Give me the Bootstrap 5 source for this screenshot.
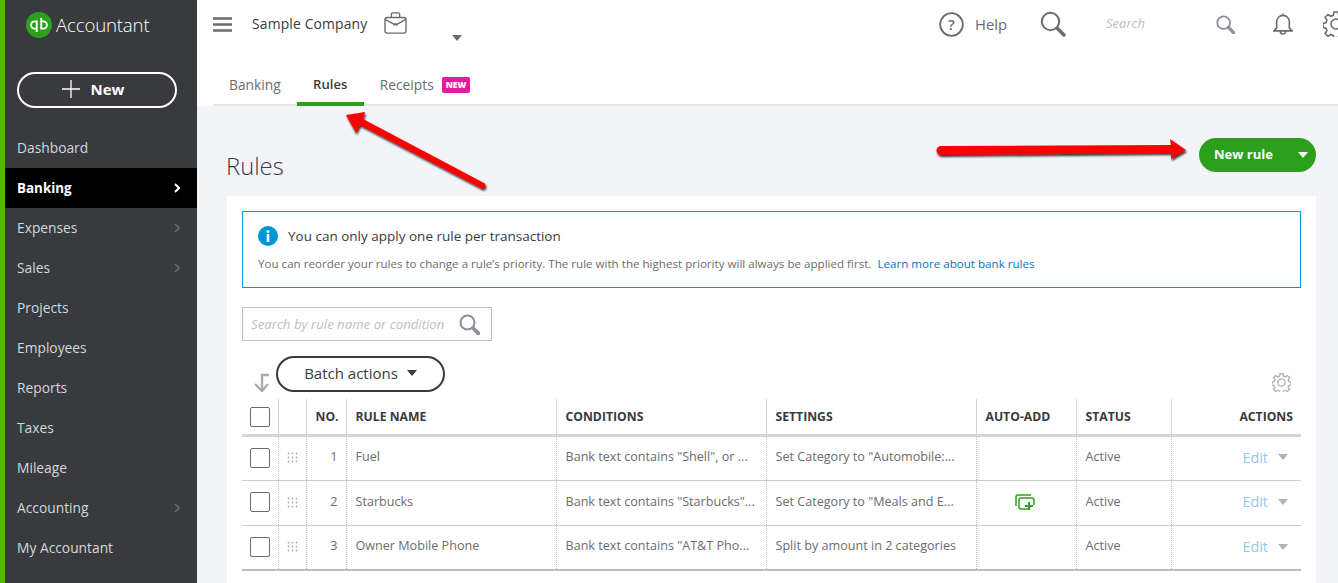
<!DOCTYPE html>
<html lang="en"><head><meta charset="utf-8"><title>Rules</title>
<link rel="stylesheet" href="https://cdn.jsdelivr.net/npm/bootstrap@5.3.0/dist/css/bootstrap.min.css">
<style>
html,body{height:583px;overflow:hidden}
body{font-family:"Open Sans","Noto Sans",sans-serif;color:#393a3d;background:#f2f4f8;width:1338px;position:relative}
.shell{height:583px}
.side{width:197px;flex:none;background:#393a3d;border-left:5px solid #53b700;height:583px;overflow:hidden}
.logo-row{height:50px;padding-left:21px;color:#fff;font-size:18.7px;font-weight:300;gap:4px;letter-spacing:-.2px}
.new-pill{width:160px;height:36px;margin:22px 0 0 12px;border:2px solid #fff;border-radius:18px;color:#fff;font-weight:700;font-size:15px;gap:11px;background:transparent;padding:0 8px 2px 0}
.new-pill:hover{color:#fff}
.side-nav{margin-top:20px}
.side-link{height:40px;padding:0 17px 0 12px;color:#d4d7dc;font-size:13.8px;font-weight:400;text-decoration:none}
.side-link.on{background:#000;color:#fff;font-weight:700;font-size:13.4px}
.chev{width:6px;height:10px;fill:none;stroke:#6b6c72;stroke-width:1.6}
.on .chev{stroke:#fff;stroke-width:2}
.main-col{flex:1;min-width:0}
.top-area{height:106px;background:#fff}
.top-row{height:48px;padding-left:16px;position:relative}
.company{font-size:13.9px;margin-left:20px;color:#393a3d;letter-spacing:.15px}
.tri{width:0;height:0;border-left:5px solid transparent;border-right:5px solid transparent;border-top:6px solid #6b6c72}
.tab-row{height:58px;margin-left:16px;padding-left:16px;border-bottom:2px solid #e3e5e9}
.tab-item{height:58px;font-size:13.8px;color:#6b6c72;padding:20px 16px 0;text-decoration:none;line-height:1;display:flex;align-items:center;gap:8px;border-bottom:4px solid transparent;flex:none}
.tab-item.first{padding-left:0;padding-right:16px}
.tab-item.on{width:67px;padding-left:0;padding-right:0;justify-content:center;font-size:13.1px;color:#393a3d;font-weight:600;border-bottom:4px solid #2ca01c;border-radius:2px 2px 0 0}
.new-tag{background:#e31ba3;color:#fff;font-size:8.500px;font-weight:800;padding:4px 4px;border-radius:2px;line-height:1}
.help-text{font-size:14.8px;color:#6b6c72}
.head-search{font-size:13px;font-style:italic;color:#babec5}
.page-head{height:90px;padding:32px 22px 0 29px}
.page-title{font-size:23.800px;font-weight:300;margin:14px 0 0;color:#393a3d}
.rule-btn{width:117px;height:34px;border-radius:17px;background:#2ca01c;color:#fff;font-size:13px;font-weight:700;border:0;padding:0 8px 0 15px}
.rule-btn:hover{background:#2ca01c;color:#fff}
.tri-w{border-top-color:#fff}
.panel{margin:0 22px 0 30px;background:#fff;padding:15px;height:400px}
.info-box{height:77px;border:1px solid #0097d8;padding:14px 15px}
.info-title{font-size:13.500px;font-weight:500;color:#393a3d}
.info-body{font-size:11.6px;color:#6b6c72;margin-top:9px}
.info-body a{color:#0077c5;text-decoration:none;margin-left:3px}
.rule-search{width:250px;height:34px;border:1px solid #babec5;margin-top:19px;padding:1px 11px 0 8px;font-size:13.2px;font-style:italic;color:#babec5}
.batch-line{height:58px;position:relative}
.batch-btn{width:169px;height:36px;border:2px solid #393a3d;border-radius:18px;background:#fff;font-size:15px;font-weight:500;color:#393a3d;gap:9px;padding:0 0 2px;margin:15px 0 0 34px}
.batch-btn:hover{border-color:#393a3d;background:#fff}
.tri-d{border-top-color:#393a3d}
.rule-table{table-layout:fixed;width:1059px;margin:0;--bs-table-bg:transparent;font-size:12.6px;color:#6b6c72}
.rule-table>:not(caption)>*>*{padding:0 8px 0 9px;vertical-align:middle;box-shadow:none;color:inherit}
.rule-table>:not(caption)>*>.chk-cell{padding-left:8px}
.rule-table>:not(caption)>*>.add-cell{padding-right:12px}
.rule-table th{height:36px;font-size:12.2px;font-weight:700;color:#393a3d;border-bottom:3px solid #d4d7dc;border-right:1px solid #d4d7dc;white-space:nowrap;padding-top:1px}
.rule-table td{height:45px;border-bottom:1px solid #c9ccd1;border-right:1px dotted #b9bcc2;white-space:nowrap;padding-bottom:1px}
.rule-table th:last-child,.rule-table td:last-child{border-right:0}
.rule-table tbody tr:last-child td{border-bottom:2px solid #babec5}
.box{display:block;width:20px;height:20px;border:1px solid #6b6c72;border-radius:2px;margin:0}
.edit-link{color:#95c9ea;font-size:14.4px;text-decoration:none}
.edit-row{padding-right:5px}
.tri-g{border-top-color:#b0b3b8;margin-left:10px}
.over-arrow{position:absolute;left:0;top:0;pointer-events:none}
</style></head><body>
<div class="d-flex shell">
<aside class="side">
 <div class="logo-row d-flex align-items-center">
  <svg width="26" height="26" viewBox="0 0 26 26"><circle cx="13" cy="13" r="13" fill="#2ca01c"/><path d="M10 8.500H8.600a4.500 4.500 0 0 0 0 9H10v-1.800H8.700a2.700 2.700 0 0 1 0-5.400h1.100v9.600h1.900V8.500zM16 17.500h1.400a4.500 4.500 0 0 0 0-9H16v1.800h1.300a2.700 2.700 0 0 1 0 5.400h-1.100V6.100h-1.900v11.400z" fill="#fff"/></svg>
  <span>Accountant</span>
 </div>
 <button class="btn new-pill d-flex align-items-center justify-content-center"><svg width="18" height="18" viewBox="0 0 18 18"><path d="M9 0v18M0 9h18" stroke="#fff" stroke-width="1.300"/></svg>New</button>
 <nav class="side-nav d-flex flex-column">
  <a class="side-link d-flex align-items-center justify-content-between" href="#">Dashboard</a>
  <a class="side-link on d-flex align-items-center justify-content-between" href="#">Banking<svg class="chev" viewBox="0 0 6 10"><path d="M1 1l4 4-4 4"/></svg></a>
  <a class="side-link d-flex align-items-center justify-content-between" href="#">Expenses<svg class="chev" viewBox="0 0 6 10"><path d="M1 1l4 4-4 4"/></svg></a>
  <a class="side-link d-flex align-items-center justify-content-between" href="#">Sales<svg class="chev" viewBox="0 0 6 10"><path d="M1 1l4 4-4 4"/></svg></a>
  <a class="side-link d-flex align-items-center" href="#">Projects</a>
  <a class="side-link d-flex align-items-center" href="#">Employees</a>
  <a class="side-link d-flex align-items-center" href="#">Reports</a>
  <a class="side-link d-flex align-items-center" href="#">Taxes</a>
  <a class="side-link d-flex align-items-center" href="#">Mileage</a>
  <a class="side-link d-flex align-items-center justify-content-between" href="#">Accounting<svg class="chev" viewBox="0 0 6 10"><path d="M1 1l4 4-4 4"/></svg></a>
  <a class="side-link d-flex align-items-center" href="#">My Accountant</a>
 </nav>
</aside>
<div class="main-col">
 <header class="top-area">
  <div class="top-row d-flex align-items-center">
   <svg width="19" height="15" viewBox="0 0 19 15"><path d="M0 1.500h19M0 7.500h19M0 13.500h19" stroke="#6b6c72" stroke-width="2.400"/></svg>
   <span class="company">Sample Company</span>
   <svg style="margin-left:16px;margin-bottom:3px" width="25" height="22" viewBox="0 0 25 24" fill="none" stroke="#6b6c72" stroke-width="1.500"><rect x="1" y="6" width="23" height="17" rx="2.500"/><path d="M8 6V2.500A1.500 1.500 0 0 1 9.500 1h6A1.500 1.500 0 0 1 17 2.500V6M1 8l9 5h5l9-5M10 14h5"/></svg>
   <span class="tri" style="position:absolute;left:255px;top:35px"></span>
   <div class="ms-auto d-flex align-items-center" style="width:399px;overflow:hidden;height:48px">
    <svg style="flex:none" width="25" height="25" viewBox="0 0 25 25"><circle cx="12.500" cy="12.500" r="11.300" fill="none" stroke="#6b6c72" stroke-width="1.800"/><text x="12.500" y="18" text-anchor="middle" font-size="15" font-weight="600" fill="#6b6c72" font-family="Open Sans">?</text></svg>
    <span class="help-text" style="margin-left:11px">Help</span>
    <svg style="margin-left:33px;flex:none" width="26" height="26" viewBox="0 0 26 26" fill="none"><circle cx="10.500" cy="10.500" r="8.700" stroke="#6b6c72" stroke-width="2"/><path d="M17 17l7 7" stroke="#6b6c72" stroke-width="3.400" stroke-linecap="round"/></svg>
    <span class="head-search" style="margin-left:40px">Search</span>
    <svg style="margin-left:71px;flex:none" width="19" height="19" viewBox="0 0 26 26" fill="none"><circle cx="10.500" cy="10.500" r="8.700" stroke="#8d9096" stroke-width="2.500"/><path d="M17 17l7 7" stroke="#8d9096" stroke-width="4.500" stroke-linecap="round"/></svg>
    <svg style="margin-left:38px;flex:none" width="20" height="25" viewBox="0 0 22 26" fill="none" stroke="#6b6c72" stroke-width="1.800"><path d="M11 3a7 7 0 0 0-7 7v7l-3 3h20l-3-3v-7a7 7 0 0 0-7-7zM11 1v2M8 20.500a3 3 0 0 0 6 0"/></svg>
    <svg style="margin-left:30px;flex:none" width="26" height="26" viewBox="0 0 26 26" fill="none" stroke="#6b6c72" stroke-width="1.600"><circle cx="13" cy="13" r="5"/><path d="M11 1h4l.7 3.300 2.500 1 2.900-1.800 2.800 2.800-1.800 2.900 1 2.500 3 .7v4l-3 .7-1 2.500 1.800 2.900-2.800 2.800-2.900-1.800-2.500 1-.7 3h-4l-.7-3-2.500-1-2.900 1.800-2.800-2.800 1.800-2.900-1-2.500-3-.7v-4l3-.7 1-2.500-1.800-2.900 2.800-2.800 2.900 1.800 2.500-1z"/></svg>
   </div>
  </div>
  <div class="tab-row d-flex">
   <a class="tab-item first" href="#">Banking</a>
   <a class="tab-item on" href="#">Rules</a>
   <a class="tab-item" href="#">Receipts <span class="new-tag">NEW</span></a>
  </div>
 </header>
 <div class="page-head d-flex justify-content-between align-items-start">
  <h1 class="page-title">Rules</h1>
  <button class="btn rule-btn d-flex align-items-center justify-content-between">New rule<span class="tri tri-w"></span></button>
 </div>
 <section class="panel">
  <div class="info-box">
   <div class="d-flex align-items-center" style="gap:10px">
    <svg width="20" height="20" viewBox="0 0 20 20"><circle cx="10" cy="10" r="10" fill="#0097d8"/><circle cx="10" cy="5.500" r="1.500" fill="#fff"/><rect x="8.700" y="8" width="2.600" height="8" fill="#fff"/></svg>
    <span class="info-title">You can only apply one rule per transaction</span>
   </div>
   <div class="info-body">You can reorder your rules to change a rule’s priority. The rule with the highest priority will always be applied first. <a href="#">Learn more about bank rules</a></div>
  </div>
  <div class="rule-search d-flex align-items-center justify-content-between">
   <span>Search by rule name or condition</span>
   <svg width="21" height="21" viewBox="0 0 26 26" fill="none"><circle cx="10.500" cy="10.500" r="8.700" stroke="#8d9096" stroke-width="2.500"/><path d="M17 17l7 7" stroke="#8d9096" stroke-width="4.500" stroke-linecap="round"/></svg>
  </div>
  <div class="batch-line d-flex justify-content-between">
   <svg style="position:absolute;left:11px;top:32px" width="18" height="19" viewBox="0 0 18 19" fill="none" stroke="#a8abb0" stroke-width="2.400"><path d="M9 18V2h7M2 11l7 7 6-7"/></svg>
   <button class="btn batch-btn d-flex align-items-center justify-content-center">Batch actions <span class="tri tri-d"></span></button>
   <svg style="position:absolute;right:10px;top:32px" width="19" height="19" viewBox="0 0 26 26" fill="none" stroke="#b0b3b8" stroke-width="1.900"><circle cx="13" cy="13" r="5"/><path d="M11 1h4l.7 3.300 2.500 1 2.900-1.800 2.800 2.800-1.800 2.900 1 2.500 3 .7v4l-3 .7-1 2.500 1.800 2.900-2.800 2.800-2.900-1.800-2.500 1-.7 3h-4l-.7-3-2.500-1-2.900 1.800-2.800-2.800 1.800-2.900-1-2.500-3-.7v-4l3-.7 1-2.500-1.800-2.900 2.800-2.800 2.900 1.800 2.500-1z"/></svg>
  </div>
  <table class="table rule-table">
   <colgroup><col style="width:36px"><col style="width:28px"><col style="width:40px"><col style="width:210px"><col style="width:210px"><col style="width:210px"><col style="width:100px"><col style="width:95px"><col style="width:130px"></colgroup>
   <thead><tr><th class="chk-cell"><span class="box"></span></th><th></th><th>NO.</th><th>RULE NAME</th><th>CONDITIONS</th><th>SETTINGS</th><th>AUTO-ADD</th><th>STATUS</th><th class="text-end">ACTIONS</th></tr></thead>
   <tbody>
   <tr><td class="chk-cell"><span class="box"></span></td><td class="text-center chk-cell"><svg width="11" height="11" viewBox="0 0 11 11" fill="#a8abb0"><circle cx="1.500" cy="1.500" r=".9"/><circle cx="5.500" cy="1.500" r=".9"/><circle cx="9.500" cy="1.500" r=".9"/><circle cx="1.500" cy="5.500" r=".9"/><circle cx="5.500" cy="5.500" r=".9"/><circle cx="9.500" cy="5.500" r=".9"/><circle cx="1.500" cy="9.500" r=".9"/><circle cx="5.500" cy="9.500" r=".9"/><circle cx="9.500" cy="9.500" r=".9"/></svg></td><td class="text-end">1</td><td>Fuel</td><td>Bank text contains "Shell", or ...</td><td>Set Category to "Automobile:...</td><td></td><td>Active</td><td><div class="edit-row d-flex align-items-center justify-content-end"><a class="edit-link" href="#">Edit</a><span class="tri tri-g"></span></div></td></tr>
   <tr><td class="chk-cell"><span class="box"></span></td><td class="text-center chk-cell"><svg width="11" height="11" viewBox="0 0 11 11" fill="#a8abb0"><circle cx="1.500" cy="1.500" r=".9"/><circle cx="5.500" cy="1.500" r=".9"/><circle cx="9.500" cy="1.500" r=".9"/><circle cx="1.500" cy="5.500" r=".9"/><circle cx="5.500" cy="5.500" r=".9"/><circle cx="9.500" cy="5.500" r=".9"/><circle cx="1.500" cy="9.500" r=".9"/><circle cx="5.500" cy="9.500" r=".9"/><circle cx="9.500" cy="9.500" r=".9"/></svg></td><td class="text-end">2</td><td>Starbucks</td><td>Bank text contains "Starbucks"...</td><td>Set Category to "Meals and E...</td><td class="text-center add-cell"><svg width="20" height="17" viewBox="0 0 20 17" fill="none" stroke="#2ca01c" stroke-width="1.500"><path d="M16 1H3a2 2 0 0 0-2 2v9"/><path d="M13 15H6a2 2 0 0 1-2-2V6a2 2 0 0 1 2-2h11a2 2 0 0 1 2 2v5"/><path d="M14 8v8M10 12h8" stroke-width="2"/></svg></td><td>Active</td><td><div class="edit-row d-flex align-items-center justify-content-end"><a class="edit-link" href="#">Edit</a><span class="tri tri-g"></span></div></td></tr>
   <tr><td class="chk-cell"><span class="box"></span></td><td class="text-center chk-cell"><svg width="11" height="11" viewBox="0 0 11 11" fill="#a8abb0"><circle cx="1.500" cy="1.500" r=".9"/><circle cx="5.500" cy="1.500" r=".9"/><circle cx="9.500" cy="1.500" r=".9"/><circle cx="1.500" cy="5.500" r=".9"/><circle cx="5.500" cy="5.500" r=".9"/><circle cx="9.500" cy="5.500" r=".9"/><circle cx="1.500" cy="9.500" r=".9"/><circle cx="5.500" cy="9.500" r=".9"/><circle cx="9.500" cy="9.500" r=".9"/></svg></td><td class="text-end">3</td><td>Owner Mobile Phone</td><td>Bank text contains "AT&amp;T Pho...</td><td>Split by amount in 2 categories</td><td></td><td>Active</td><td><div class="edit-row d-flex align-items-center justify-content-end"><a class="edit-link" href="#">Edit</a><span class="tri tri-g"></span></div></td></tr>
   </tbody>
  </table>
 </section>
</div>
</div>
<svg class="over-arrow" width="1338" height="583" viewBox="0 0 1338 583">
 <defs><filter id="sh" x="-10%" y="-30%" width="120%" height="170%"><feDropShadow dx="1" dy="2" stdDeviation="1.200" flood-color="#000" flood-opacity=".8"/></filter></defs>
 <path filter="url(#sh)" fill="#f00" d="M346 115l19-3-2 7 121 64a2.500 2.500 0 0 1-3 5l-121-63-4 8z"/>
 <path filter="url(#sh)" fill="#f00" d="M941 146l230-1-1-6 16 11-15 9v-6l-230 2a4.500 4.500 0 0 1 0-9z"/>
</svg>
<script src="https://cdn.jsdelivr.net/npm/bootstrap@5.3.0/dist/js/bootstrap.bundle.min.js"></script>
</body></html>
